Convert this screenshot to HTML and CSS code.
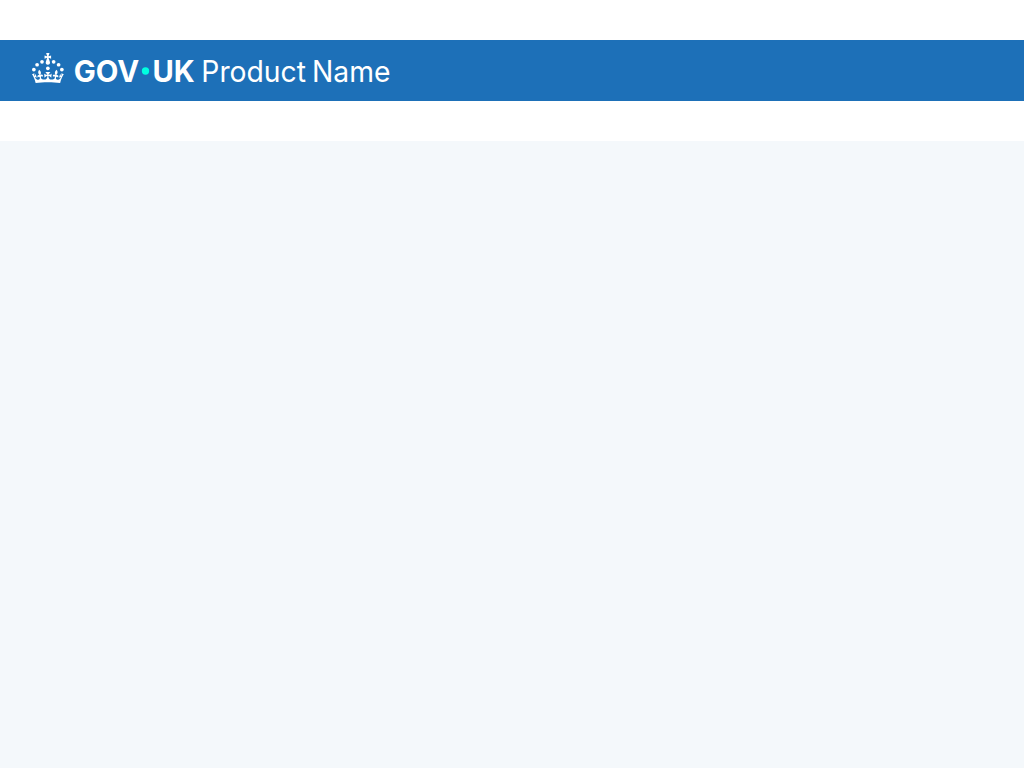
FILE: index.html
```html
<!DOCTYPE html>
<html lang="en">
<head>
<meta charset="utf-8">
<title>Product Name</title>
<link rel="stylesheet" href="styles.css">
</head>
<body>
<div class="preview">
<header class="header">
<a class="brand">
<svg class="logo" width="162" height="30" viewBox="0 0 324 60" role="img" aria-label="GOV.UK">
<g fill="currentColor">
<circle cx="20" cy="17.6" r="3.7"/>
<circle cx="10.2" cy="23.5" r="3.7"/>
<circle cx="3.7" cy="33.2" r="3.7"/>
<circle cx="31.7" cy="30.6" r="3.7"/>
<circle cx="43.3" cy="17.6" r="3.7"/>
<circle cx="53.2" cy="23.5" r="3.7"/>
<circle cx="59.7" cy="33.2" r="3.7"/>
<path d="M33.1,9.8c.2-.1.3-.3.5-.5l4.6,2.4v-6.8l-4.6,1.5c-.1-.2-.3-.3-.5-.5l1.9-5.9h-6.7l1.9,5.9c-.2.1-.3.3-.5.5l-4.6-1.5v6.8l4.6-2.4c.1.2.3.3.5.5l-2.6,8c-.9,2.8,1.2,5.7,4.1,5.7h0c3,0,5.1-2.9,4.1-5.7l-2.6-8ZM37,37.9s-3.4,3.8-4.1,6.1c2.2,0,4.2-.5,6.4-2.8l-.7,8.5c-2-2.8-4.4-4.1-5.7-3.8.1,3.1.5,6.7,5.8,7.2,3.7.3,6.7-1.5,7-3.8.4-2.6-2-4.3-3.7-1.6-1.4-4.5,2.4-6.1,4.9-3.2-1.9-4.5-1.8-7.7,2.4-10.9,3,4,2.6,7.3-1.2,11.1,2.4-1.3,6.2,0,4,4.6-1.2-2.8-3.7-2.2-4.2.2-.3,1.7.7,3.7,3,4.2,1.9.3,4.7-.9,7-5.9-1.3,0-2.4.7-3.9,1.7l2.4-8c.6,2.3,1.4,3.7,2.2,4.5.6-1.6.5-2.8,0-5.3l5,1.8c-2.6,3.6-5.2,8.7-7.3,17.5-7.4-1.1-15.7-1.7-24.5-1.7h0c-8.8,0-17.1.6-24.5,1.7-2.1-8.9-4.7-13.9-7.3-17.5l5-1.8c-.5,2.5-.6,3.7,0,5.3.8-.8,1.6-2.3,2.2-4.5l2.4,8c-1.5-1-2.6-1.7-3.9-1.7,2.3,5,5.2,6.2,7,5.9,2.3-.4,3.3-2.4,3-4.2-.5-2.4-3-3.1-4.2-.2-2.2-4.6,1.6-6,4-4.6-3.7-3.7-4.2-7.1-1.2-11.1,4.2,3.2,4.3,6.4,2.4,10.9,2.5-2.8,6.3-1.3,4.9,3.2-1.8-2.7-4.1-1-3.7,1.6.3,2.3,3.3,4.1,7,3.8,5.4-.5,5.7-4.2,5.8-7.2-1.3-.2-3.7,1-5.7,3.8l-.7-8.5c2.2,2.3,4.2,2.7,6.4,2.8-.7-2.3-4.1-6.1-4.1-6.1h10.6,0Z"/>
<text class="word" x="83.5" y="58" textLength="131" lengthAdjust="spacingAndGlyphs">GOV</text>
<text class="word" x="241" y="58" textLength="84.5" lengthAdjust="spacingAndGlyphs">UK</text>
</g>
<circle class="dot" cx="227" cy="36" r="7.3"/>
</svg>
<svg class="product" width="190" height="30" viewBox="0 0 190 30" role="img" aria-label="Product Name">
<text x="-0.7" y="29" textLength="189.2" lengthAdjust="spacingAndGlyphs">Product Name</text>
</svg>
</a>
</header>
</div>
</body>
</html>
```
FILE: styles.css
```css
body {
  margin: 0;
  min-height: 100vh;
  background: #f4f8fb;
  font-family: Inter, Arial, sans-serif;
}
.preview {
  padding: 40px 0;
  background: #fff;
}
.header {
  box-sizing: border-box;
  height: 61px;
  padding: 13px 32px 0;
  background: #1d70b8;
  color: #fff;
}
.brand {
  display: flex;
  gap: 8px;
}
.logo,
.product {
  display: block;
  overflow: visible;
}
.word {
  font-size: 59px;
  font-weight: 700;
}
.dot {
  fill: #00ffe0;
}
.product {
  fill: currentColor;
  font-size: 29.5px;
  font-weight: 400;
  word-spacing: -2px;
}
```
